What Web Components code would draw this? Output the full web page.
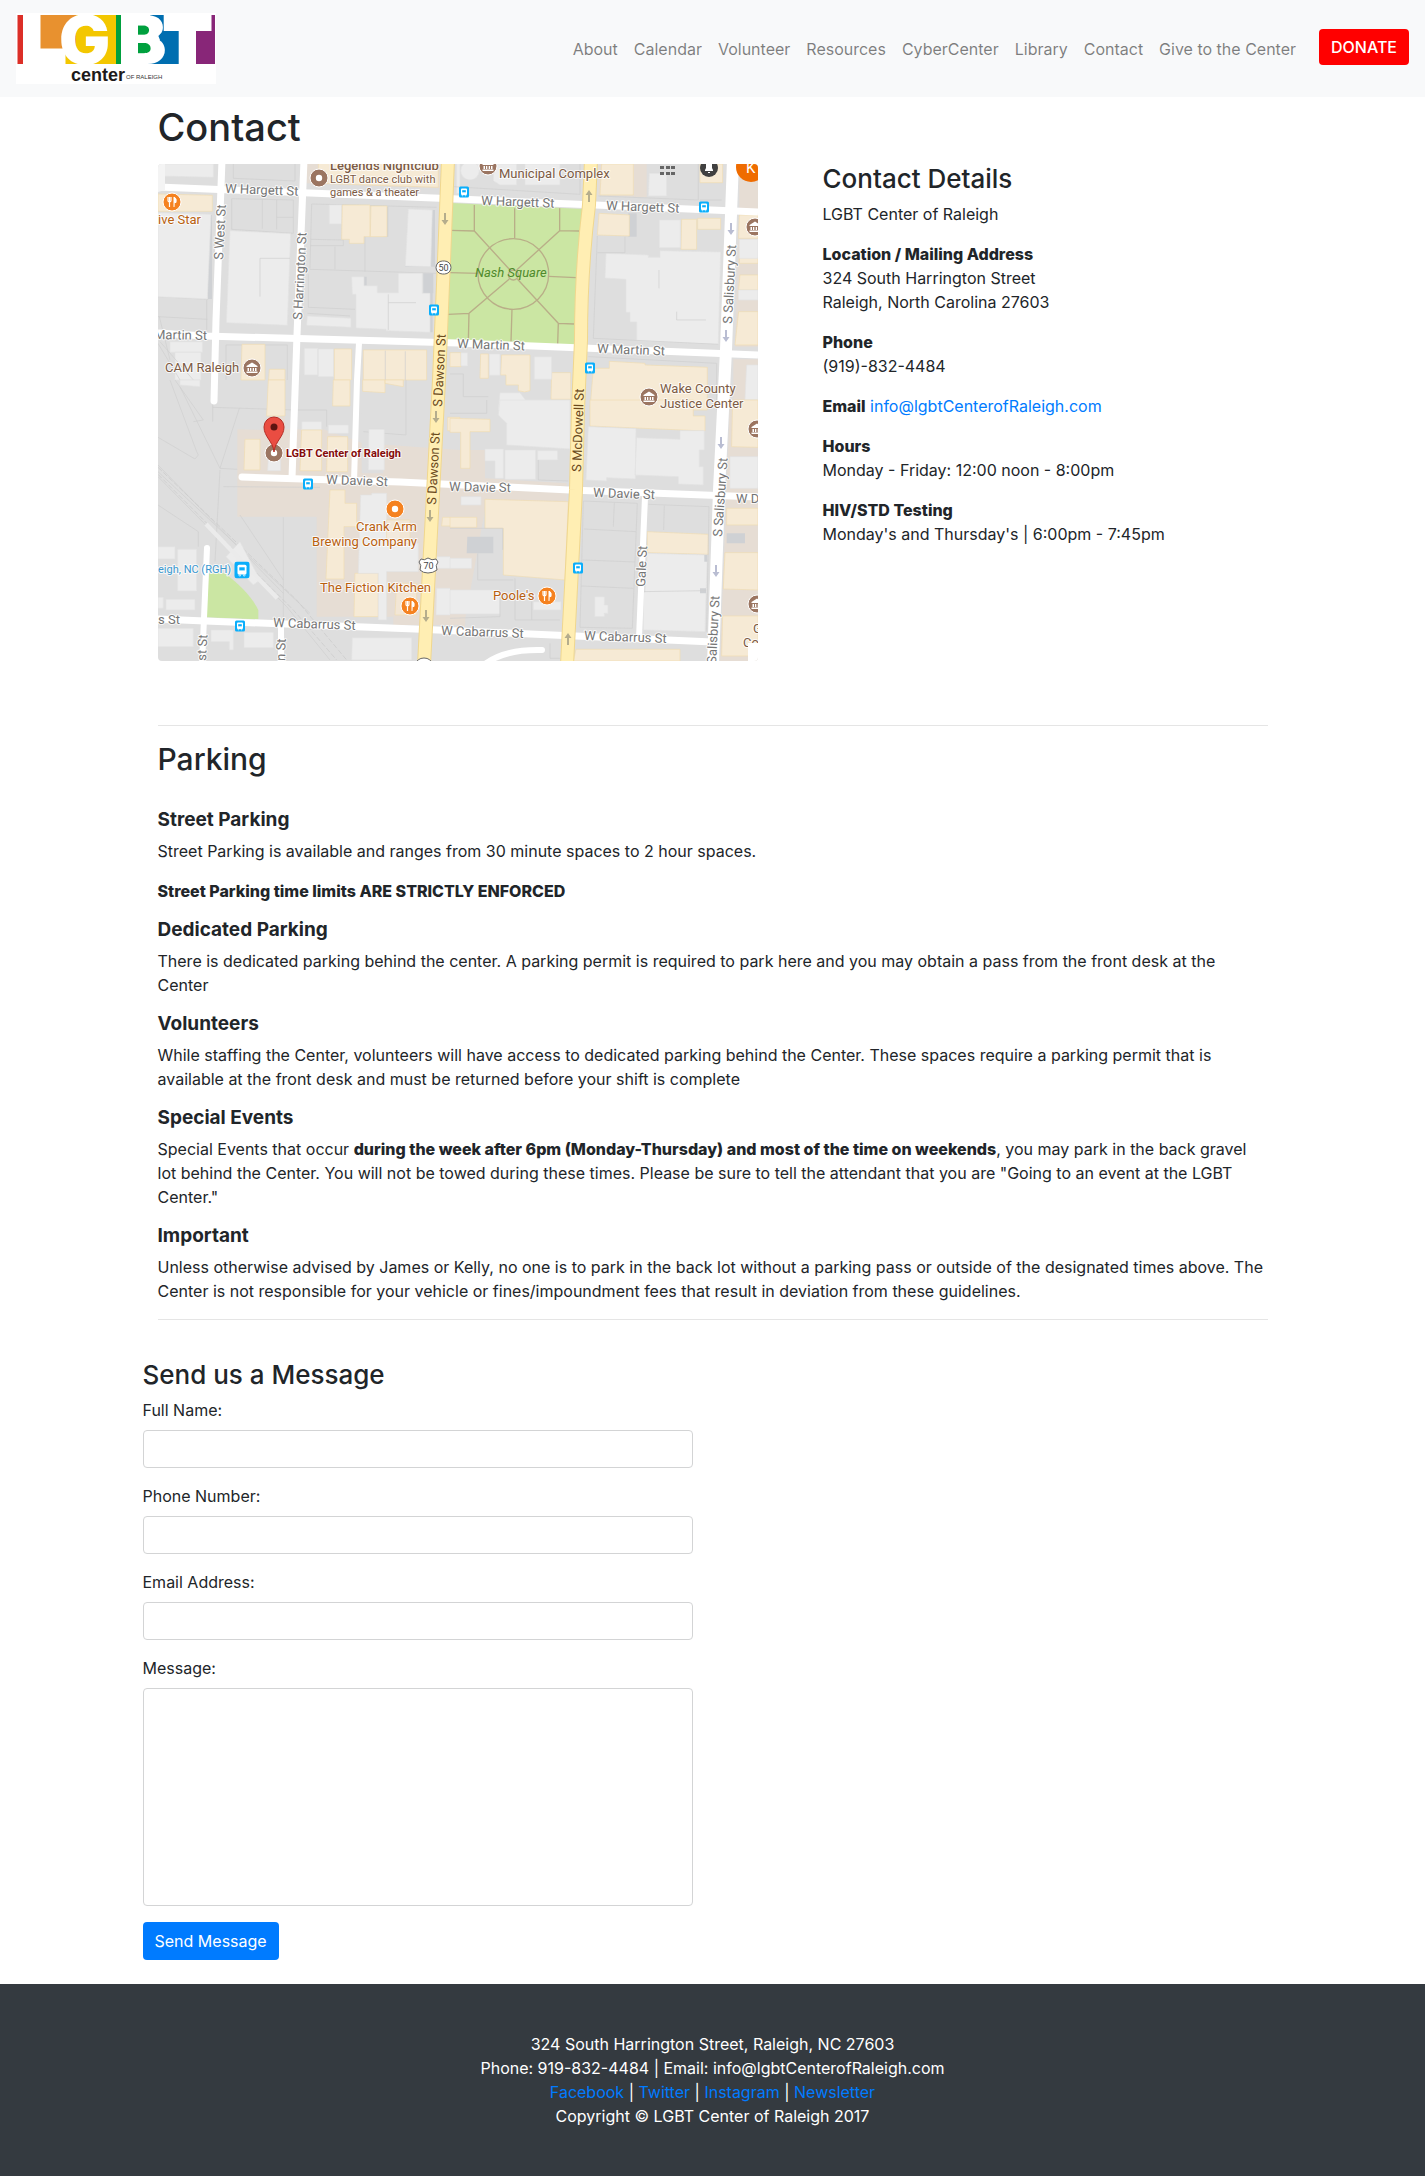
<!DOCTYPE html>
<html lang="en">
<head>
<meta charset="utf-8">
<meta name="viewport" content="width=device-width, initial-scale=1">
<title>Contact</title>
<style>
  body {
    margin: 0;
    background: #fff;
    color: #212529;
    font: 400 16px/24px Inter, "Liberation Sans", sans-serif;
  }
</style>
</head>
<body>
<contact-page></contact-page>

<template id="t-page">
  <style>
    :host { display: block; }
    main { box-sizing: border-box; max-width: 1140px; margin: 0 auto; padding: 8px 0 24px; }
    section { padding: 0 15px; }
    h1 { margin: 0 0 15px; font-size: 38px; line-height: 44px; font-weight: 500; }
    .cols { display: grid; grid-template-columns: 7fr 5fr; margin: 0 -15px; }
    .cols > * { padding: 0 15px; }
    hr { height: 1px; border: 0; margin: 64px 0 16px; background: #e5e5e5; }
    hr.end { margin: 16px 0 40px; }
  </style>
  <site-header></site-header>
  <main>
    <section>
      <h1>Contact</h1>
      <div class="cols">
        <site-map></site-map>
        <contact-details></contact-details>
      </div>
      <hr>
      <parking-info></parking-info>
      <hr class="end">
    </section>
    <message-form></message-form>
  </main>
  <site-footer></site-footer>
</template>

<template id="t-header">
  <style>
    :host { display: block; background: #f8f9fa; }
    header { display: flex; align-items: center; justify-content: space-between; padding: 13px 16px; }
    site-logo { flex: none; }
    ul { display: flex; align-items: flex-start; margin: 0; padding: 0; list-style: none; }
    .donate { margin-left: 15px; padding: 6px 12px; border: 0; border-radius: 4px; background: #f00; color: #fff; font: inherit; font-weight: 500; }
  </style>
  <header>
    <site-logo></site-logo>
    <nav>
      <ul>
        <li><nav-item>About</nav-item></li>
        <li><nav-item>Calendar</nav-item></li>
        <li><nav-item>Volunteer</nav-item></li>
        <li><nav-item>Resources</nav-item></li>
        <li><nav-item>CyberCenter</nav-item></li>
        <li><nav-item>Library</nav-item></li>
        <li><nav-item>Contact</nav-item></li>
        <li><nav-item>Give to the Center</nav-item></li>
        <li><button class="donate" type="button">DONATE</button></li>
      </ul>
    </nav>
  </header>
</template>

<template id="t-nav-item">
  <style>
    :host { display: block; }
    a { display: block; padding: 8px; color: rgba(0,0,0,.5); text-decoration: none; white-space: nowrap; }
  </style>
  <a href="#"><slot></slot></a>
</template>

<template id="t-logo">
  <style>
    :host { display: block; }
    svg { display: block; }
    .big { font: 900 68px Inter, sans-serif; fill: #fff; }
  </style>
  <svg width="200" height="71" viewBox="16 13 200 71" role="img" aria-label="LGBT Center of Raleigh">
    <rect x="16" y="13" width="200" height="71" fill="#fff"/>
    <rect x="17.500" y="15" width="5.500" height="49" fill="#dc2f27"/>
    <rect x="40.500" y="15" width="36" height="33.500" fill="#e8912f"/>
    <path d="M76 15H116V64H65.500V48.500H76Z" fill="#f3c700"/>
    <rect x="138" y="24" width="13" height="32" fill="#00a03e"/>
    <path d="M150 15H163.700V31H178.700V64H147L160 40Z" fill="#006eb0"/>
    <path d="M211.500 15H215V64H196V31H211.500Z" fill="#882678"/>
    <text class="big" x="59" y="64">G</text>
    <text class="big" x="121" y="64">B</text>
    <rect x="116" y="15" width="5" height="49" fill="#00a03e"/>
    <text x="71" y="81" font-family="Liberation Sans, sans-serif" font-weight="700" font-size="18" fill="#1d1a1a">center</text>
    <text x="126" y="79" font-family="Liberation Sans, sans-serif" font-size="6" fill="#333">OF RALEIGH</text>
  </svg>
</template>

<template id="t-details">
  <style>
    :host { display: block; }
    h3 { margin: 0 0 8px; font-size: 26px; line-height: 30px; font-weight: 500; }
    p { margin: 0 0 16px; }
    strong { font-weight: 800; }
    a { color: #007bff; text-decoration: none; }
  </style>
  <h3>Contact Details</h3>
  <p>LGBT Center of Raleigh</p>
  <p><strong>Location / Mailing Address</strong><br>324 South Harrington Street<br>Raleigh, North Carolina 27603</p>
  <p><strong>Phone</strong><br>(919)-832-4484</p>
  <p><strong>Email</strong> <a href="mailto:info@lgbtCenterofRaleigh.com">info@lgbtCenterofRaleigh.com</a></p>
  <p><strong>Hours</strong><br>Monday - Friday: 12:00 noon - 8:00pm</p>
  <p><strong>HIV/STD Testing</strong><br>Monday's and Thursday's | 6:00pm - 7:45pm</p>
</template>

<template id="t-parking">
  <style>
    :host { display: block; }
    h2 { margin: 0 0 32px; font-size: 30px; line-height: 35px; font-weight: 500; }
    strong { font-weight: 800; }
  </style>
  <h2>Parking</h2>
  <info-block heading="Street Parking">
    <p>Street Parking is available and ranges from 30 minute spaces to 2 hour spaces.</p>
    <p><strong>Street Parking time limits ARE STRICTLY ENFORCED</strong></p>
  </info-block>
  <info-block heading="Dedicated Parking">
    <p>There is dedicated parking behind the center. A parking permit is required to park here and you may obtain a pass from the front desk at the Center</p>
  </info-block>
  <info-block heading="Volunteers">
    <p>While staffing the Center, volunteers will have access to dedicated parking behind the Center. These spaces require a parking permit that is available at the front desk and must be returned before your shift is complete</p>
  </info-block>
  <info-block heading="Special Events">
    <p>Special Events that occur <strong>during the week after 6pm (Monday-Thursday) and most of the time on weekends</strong>, you may park in the back gravel lot behind the Center. You will not be towed during these times. Please be sure to tell the attendant that you are "Going to an event at the LGBT Center."</p>
  </info-block>
  <info-block heading="Important">
    <p>Unless otherwise advised by James or Kelly, no one is to park in the back lot without a parking pass or outside of the designated times above. The Center is not responsible for your vehicle or fines/impoundment fees that result in deviation from these guidelines.</p>
  </info-block>
</template>

<template id="t-info-block">
  <style>
    :host { display: block; }
    h5 { margin: 0 0 8px; font-size: 19px; line-height: 22px; font-weight: 700; }
    ::slotted(p) { margin: 0 0 16px; }
  </style>
  <h5></h5>
  <slot></slot>
</template>

<template id="t-form">
  <style>
    :host { display: block; }
    h3 { margin: 0 0 8px; font-size: 26px; line-height: 30px; font-weight: 500; }
    form { max-width: 550px; }
    button { padding: 7px 12px; border: 0; border-radius: 4px; background: #007bff; color: #fff; font: inherit; display: block; }
  </style>
  <h3>Send us a Message</h3>
  <form>
    <form-field label="Full Name:" type="text"></form-field>
    <form-field label="Phone Number:" type="tel"></form-field>
    <form-field label="Email Address:" type="email"></form-field>
    <form-field label="Message:" type="multiline"></form-field>
    <button type="button">Send Message</button>
  </form>
</template>

<template id="t-field">
  <style>
    :host { display: block; margin-bottom: 16px; }
    label { display: block; margin-bottom: 8px; }
    input, textarea {
      display: block; box-sizing: border-box; width: 100%; height: 38px; margin: 0;
      padding: 6px 12px; border: 1px solid #d3d4d5; border-radius: 4px;
      background: #fff; color: #495057; font: inherit;
    }
    textarea { height: 218px; resize: none; }
  </style>
  <label for="control"></label>
</template>

<template id="t-footer">
  <style>
    :host { display: block; background: #343a40; color: #fff; }
    footer { padding: 48px 16px; text-align: center; }
    a { color: #007bff; text-decoration: none; }
  </style>
  <footer>
    <div>324 South Harrington Street, Raleigh, NC 27603</div>
    <div>Phone: 919-832-4484 | Email: info@lgbtCenterofRaleigh.com</div>
    <div><a href="#">Facebook</a> | <a href="#">Twitter</a> | <a href="#">Instagram</a> | <a href="#">Newsletter</a></div>
    <div>Copyright © LGBT Center of Raleigh 2017</div>
  </footer>
</template>

<template id="t-map">
  <style>
    :host { display: block; }
    svg { display: block; width: 100%; max-width: 600px; height: auto; border-radius: 4px; }
    text { font-family: Roboto, sans-serif; font-size: 13px; paint-order: stroke; stroke: #fff; stroke-opacity: .8; stroke-width: 2px; stroke-linejoin: round; }
    .st { fill: #757575; }
    .hw { fill: #6b4a1c; stroke: #fff0b8; }
    .poi { fill: #7c5a44; }
    .food { fill: #b8600f; }
    .small { font-size: 11px; }
    .plain { stroke: none; }
    .road { fill: none; stroke: #fff; stroke-width: 7; stroke-linejoin: round; }
    .lot { fill: none; stroke: #cfcfcf; stroke-width: 2; }
    .g { fill: #ececec; stroke: #e2e2e2; stroke-width: 2; }
    .t { fill: #f6ead5; stroke: #f0dcb2; stroke-width: 2; }
    .z { fill: #e6ddd4; }
    .sh { fill: #cfd1d4; }
  </style>
  <svg viewBox="158 164 600 497" role="img" aria-label="Map of the streets around the LGBT Center of Raleigh">
    <defs>
      <g id="bus"><rect x="-5" y="-5.500" width="10" height="11" rx="1.500" fill="#0aaefb"/><rect x="-3" y="-3.500" width="6" height="6.500" rx="1" fill="#fff"/><path d="M-2-2H2V.500H-2ZM-2 3H-1V4H-2ZM1 3H2V4H1Z" fill="#0aaefb" stroke="#fff" stroke-width=".4"/></g>
      <g id="food"><circle r="9" fill="#f58220" stroke="#fff"/><path d="M-4-5V-1.500Q-4 0-2.500 0V5M-2.500-5V0M-1-5V-1.500Q-1 0-2.500 0" fill="none" stroke="#fff" stroke-width="1.200"/><path d="M2 5V-5Q5-4 4 .500H2.500" fill="#fff" stroke="#fff"/></g>
      <g id="dot"><circle r="9" stroke="#fff"/><circle r="3.200" fill="#fff"/></g>
      <g id="hall"><circle r="9" fill="#9b7561" stroke="#fff"/><path d="M-5.500-2 0-5.500 5.500-2V-1H-5.500ZM-4.500 0H-3V3H-4.500ZM-2 0H-.700V3H-2ZM.700 0H2V3H.700ZM3 0H4.500V3H3ZM-5.500 3.500H5.500V5H-5.500Z" fill="#fff"/></g>
      <path id="down" d="M-1-6H1V1H3.500L0 6-3.500 1H-1Z"/>
    </defs>
    <rect x="158" y="164" width="600" height="497" fill="#dedede"/>

    <!-- north-west blocks -->
    <g transform="translate(150 100) scale(.3333)">
      <path class="z" d="M470 190H870V265L470 250Z"/>
      <path class="t" d="M505 190H865V262L505 250Z"/>
      <path class="g" d="M24 192H190V232L24 228Z"/>
      <path class="lot" d="M250 192V235L435 243V192M245 296V388L430 400V300ZM337 298V386M380 300V388M380 352H430M24 590 175 598M24 650 172 658M28 650 60 780M170 600V690"/>
      <path class="t" d="M24 282 187 286V334H24Z"/>
      <path class="sh" d="M174 345H186V597H174Z"/>
      <path class="g" d="M24 338 183 343 172 597 24 590ZM240 392 422 401 412 676 229 668Z"/>
      <path class="lot" d="M330 475H420M330 475V590M485 312 860 322M485 312 480 505M482 418 580 420V437H482M555 440V508M480 508 860 520M645 390V515M475 523V622L615 628M472 640 600 648"/>
      <path class="g" d="M538 315H575V372H538Z"/>
      <path class="sh" d="M700 320H715V410H700ZM765 500H855V330H845ZM820 520H850V580H820ZM838 580H848V697H838ZM640 530H650V560H640Z"/>
      <path class="t" d="M577 315H660V410H642V430H598V418H575ZM663 318H711V410H661Z"/>
      <path class="g" d="M775 327 847 330 842 500 766 498ZM605 530H642V557H682V578H745V520H817V580H840V697L708 692V688L618 684V583H607ZM472 648 603 655V682L470 676Z"/>
      <path class="lot" d="M715 583V690M715 608H798"/>
      <path class="g" d="M60 725H157V757H60ZM75 757H153V840H75ZM463 745H503V825H463ZM505 747H551V830H505Z"/>
      <path class="lot" d="M24 730 90 840M30 725 130 840M228 735H412V840M228 735V840"/>
      <path class="t" d="M276 733H345V840H273ZM358 808H405V840H356ZM553 747H605V840H553ZM640 750H830V840H640Z"/>
      <path class="lot" d="M706 752V840M766 754V840"/>
      <path class="g" d="M865 190H930V280H920V190Z"/>
    </g>

    <!-- north-east blocks -->
    <g transform="translate(450 150) scale(.3333)">
      <path class="z" d="M445 40H590V142L445 136ZM868 42H924V190H868ZM868 192H924V590H855Z"/>
      <path class="g" d="M60 42H200V105H150L130 92V60H60ZM225 42H330V105H225ZM598 70H650V138H595Z"/>
      <circle class="g" cx="60" cy="62" r="28"/>
      <path class="lot" d="M10 42V110L390 133V42M445 138 745 150M745 42V150M750 150H815"/>
      <path class="sh" d="M535 190H560V260H535Z"/>
      <path class="t" d="M455 42H550V135H450ZM750 42H818V98H750ZM447 190 538 195V258L442 255ZM695 208H740V298H693ZM743 205 812 205V238H743ZM868 195H924V265H866ZM870 375H924V420H866ZM866 485H924V585H855ZM870 300H924V340H868Z"/>
      <path class="g" d="M628 210H691V293H628ZM868 268H924V325H868ZM865 420H924V450H865ZM468 310 595 315V322H630V302L812 306 805 583 560 572V516H540V487H528V388L465 384Z"/>
      <path class="lot" d="M442 258 430 565 805 583M442 308H525V260M627 360V415M680 485V510H768"/>
      <path class="t" d="M0 608H33V650H0ZM92 612H115V685H90ZM155 615H240V722Q225 730 205 722V705H168V675H152ZM305 668H362V748H303ZM430 655H478V634L585 640V645L772 652V780H420Z"/>
      <path class="g" d="M33 608H53V648H33ZM118 612H150V676H118ZM253 620H305V688H253ZM150 728H210L245 775V780H145Z"/>
      <path class="lot" d="M0 672H40V740H115M415 620 800 640V780"/>
      <path class="z" d="M850 628H924V780H850Z"/>
      <path class="g" d="M890 645H924V750H885Z"/>
    </g>

    <!-- south-west blocks -->
    <g transform="translate(150 380) scale(.3333)">
      <path class="z" d="M262 148 350 150V110H405V148H520L640 190 930 210V735L730 735V710H500V410H262Z"/>
      <path fill="#dedede" d="M437 0H615V145H437ZM635 100H700V280H635Z"/>
      <path class="lot" d="M60 0 140 215 145 225 135 237 24 172M90 20 210 265M75 0 160 120 130 125M188 0V125M188 82 435 90M268 85 210 265 262 268M210 270 195 545M220 320 510 322M24 255 400 640M24 275 480 700M24 290 410 680 540 840M270 405 400 600M400 412V840M24 375 145 455V500M437 90H530V140M768 0V165L640 155"/>
      <path d="M24 262 440 660 590 840M24 283 430 690 560 840" fill="none" stroke="#c9c9c9" stroke-width="2" stroke-dasharray="16 6"/>
      <path class="g" d="M90 0H150V20L90 15ZM455 125H515V150H455ZM535 135H595V160H535ZM657 148H703V270H655ZM355 235H392V272H353ZM24 500H75V537H24ZM83 508H140V633H83ZM24 652H40V685H24ZM48 658H135V690H48ZM24 745H130V800H24ZM183 750H250V810H238V785H183ZM282 757H370V803H282ZM607 773H785V840H605ZM860 625H930V705H858Z"/>
      <path class="t" d="M355 0H405V108H350ZM638 0H705V38L638 34ZM550 0H600V78H548ZM285 178H330V270H282ZM455 150H515V272H450ZM533 170H593V275H530ZM540 330H585V370H620V440H582V597H528ZM893 112H930V152H893ZM878 412H930V438H875ZM705 0H760V20L705 10ZM615 580H685V710H612Z"/>
      <path class="g" d="M632 345H665V340H710V445H750V490H805V575H710V720H685V580H625ZM228 530 270 485 330 600 310 615ZM835 530H930V565H835Z"/>
      <path class="t" d="M740 610H800V705H735ZM710 420H780V490H710Z" fill-opacity=".7"/>
      <path d="M168 432 382 655" stroke="#ebebeb" stroke-width="13" fill="none"/>
      <path d="M176 580H225C270 615 305 650 325 690V718L169 712Z" fill="#cbe6a3"/>
    </g>

    <!-- south-east blocks -->
    <g transform="translate(450 400) scale(.3333)">
      <path class="z" d="M0 150H105V235L350 250V305H60L45 680 0 670ZM0 300H110L45 660 0 670ZM840 0H924V783H810Z"/>
      <path class="g" d="M150 0H360V147L170 135V70L145 45Z"/>
      <path class="t" d="M0 55 120 58V95H60V205H32V97H0ZM420 0H730V48H765V93L420 78ZM105 298 355 305 345 540 160 525V385H105ZM0 352H80V382H0ZM848 0H924V142L845 140ZM592 395 775 403V463L592 458ZM825 458H924V570L820 567ZM818 648H924V768H815ZM830 325H924V375H830ZM378 748H690V783H370Z"/>
      <path class="g" d="M415 80 558 86 556 237 470 233V243L408 240ZM560 113 690 118V92H763V150H748V200H760V255L685 252V230L555 225ZM105 147H160V235H135V183H105ZM165 150H257V238H165ZM263 152H323V180H263ZM33 290H93V315H33ZM0 475H65V505H0ZM0 570H150V642H0ZM250 605H333V630H250ZM434 590H463V615H474V640H463V650H434ZM592 460 772 465 765 695 580 690V578L585 575ZM840 170H924V265H840Z"/>
      <path class="sh" d="M750 565H768V580H750ZM763 465H772V485H763ZM52 410H130V460H50ZM830 400H885V430H830Z"/>
      <path class="lot" d="M400 303 562 310 547 685 390 682ZM402 387 558 395M398 480 555 486M393 558 550 565M493 308 490 380M595 313 777 320 770 695M643 317 641 390M0 385H158V450M83 460V540H190M150 570V650L0 655M195 535V660H330M245 605V660M265 180V240L355 243M300 730V775H330M580 575 768 572M0 40H110V0M115 255 355 260"/>
    </g>

    <!-- Nash Square -->
    <path d="M451 203 583 209 581 240 575 345 447 340Z" fill="#cbe6a3"/>
    <g transform="translate(450 150) scale(.3333)" fill="none" stroke="#b9ae88" stroke-width="4">
      <circle cx="190" cy="372" r="106"/><circle cx="190" cy="375" r="15"/>
      <path d="M73 165V243M0 241 73 243 180 360M194 175V265M329 175V242L388 243M329 242 200 360M0 368 85 370M296 379 378 383M-6 493 57 490 178 387M57 490 55 572M186 478 183 575M202 387 325 520 372 522M325 520 323 583"/>
    </g>

    <!-- streets -->
    <g class="road">
      <path d="M158 187 458 199 758 212M158 333 205 336 458 343 758 355M158 619 205 621 415 629 530 634 713 642"/>
      <path d="M242 477 400 482 570 490 758 497" stroke-linecap="round"/>
      <path d="M222 160 216 320 214 401" stroke-linecap="round"/>
      <path d="M304 160 297 335 292 478"/>
      <path d="M359 343 357 380 354 482M645 497 639 638M281 624V665" stroke-width="6"/>
      <path d="M207 548 202 665M485 664Q505 649 542 650" stroke-width="6" stroke-linecap="round"/>
      <path d="M733 160 726 350 719 490 713 665" stroke-width="12"/>
      <path d="M448 160 444 260 439 380 424 665M591 160 589 205Q581 270 581 340L578 410 576 490 567 665" stroke="#f0d78e" stroke-width="14"/>
      <path d="M448 160 444 260 439 380 424 665M591 160 589 205Q581 270 581 340L578 410 576 490 567 665" stroke="#ffeeb3" stroke-width="12"/>
    </g>
    <g fill="#b5ad8c">
      <use href="#down" x="445" y="219"/><use href="#down" x="436" y="417"/><use href="#down" x="430" y="516"/><use href="#down" x="426" y="616"/>
      <use href="#down" transform="translate(589 196) rotate(180)"/><use href="#down" transform="translate(568 639) rotate(180)"/>
    </g>
    <g fill="#b9bdd2">
      <use href="#down" x="731" y="229"/><use href="#down" x="726" y="336"/><use href="#down" x="721" y="443"/><use href="#down" x="716" y="571"/>
    </g>
    <path d="M158 164H165V190L158 192Z" fill="#f4f4f4"/>

    <!-- street names -->
    <g>
      <text class="st" transform="translate(225 193) rotate(2)">W Hargett St</text>
      <text class="st" transform="translate(481 205) rotate(2)">W Hargett St</text>
      <text class="st" transform="translate(606 210) rotate(2)">W Hargett St</text>
      <text class="st" transform="translate(154 339) rotate(1)">Martin St</text>
      <text class="st" transform="translate(457 348) rotate(2)">W Martin St</text>
      <text class="st" transform="translate(597 353) rotate(2)">W Martin St</text>
      <text class="st" transform="translate(326 484) rotate(2)">W Davie St</text>
      <text class="st" transform="translate(449 491) rotate(1)">W Davie St</text>
      <text class="st" transform="translate(593 497) rotate(2)">W Davie St</text>
      <text class="st" x="736" y="503">W D</text>
      <text class="st" x="158" y="624">s St</text>
      <text class="st" transform="translate(273 627) rotate(2)">W Cabarrus St</text>
      <text class="st" transform="translate(441 635) rotate(2)">W Cabarrus St</text>
      <text class="st" transform="translate(584 640) rotate(2)">W Cabarrus St</text>
      <text class="st" transform="translate(223 260) rotate(-87)">S West St</text>
      <text class="st" transform="translate(302 320) rotate(-87)">S Harrington St</text>
      <text class="st" transform="translate(732 324) rotate(-87)">S Salisbury St</text>
      <text class="st" transform="translate(722 537) rotate(-86)">S Salisbury St</text>
      <text class="st" transform="translate(716 664) rotate(-87)">Salisbury St</text>
      <text class="st" transform="translate(645 587) rotate(-87)">Gale St</text>
      <text class="st" transform="translate(206 661) rotate(-87)">st St</text>
      <text class="st" transform="translate(285 661) rotate(-88)">n St</text>
    </g>
    <text class="hw" transform="translate(442 407) rotate(-87)">S Dawson St</text>
    <text class="hw" transform="translate(436 505) rotate(-87)">S Dawson St</text>
    <text class="hw" transform="translate(581 472) rotate(-88)">S McDowell St</text>

    <!-- places -->
    <g fill="#9b7561"><use href="#dot" x="319" y="178"/><use href="#dot" x="274" y="453"/></g>
    <use href="#dot" x="395" y="509" fill="#f58220"/>
    <use href="#food" x="172" y="202"/><use href="#food" x="410" y="606"/><use href="#food" x="547" y="596"/>
    <use href="#hall" x="252" y="368"/><use href="#hall" x="488" y="166"/><use href="#hall" x="649" y="397"/>
    <use href="#hall" x="755" y="227"/><use href="#hall" x="757" y="429"/><use href="#hall" x="757" y="604"/>
    <use href="#bus" x="464" y="192"/><use href="#bus" x="704" y="207"/><use href="#bus" x="434" y="310"/><use href="#bus" x="590" y="368"/>
    <use href="#bus" x="308" y="484"/><use href="#bus" x="578" y="568"/><use href="#bus" x="240" y="626"/>
    <use href="#bus" transform="translate(242 570) scale(1.500)"/>
    <text class="poi" x="330" y="170" font-weight="500">Legends Nightclub</text>
    <text class="poi small" x="330" y="183">LGBT dance club with</text>
    <text class="poi small" x="330" y="196">games &amp; a theater</text>
    <text class="poi" x="499" y="178">Municipal Complex</text>
    <text class="food" x="158" y="224">ive Star</text>
    <text class="poi" x="165" y="372">CAM Raleigh</text>
    <text class="poi" x="660" y="393">Wake County</text>
    <text class="poi" x="660" y="408">Justice Center</text>
    <text class="food" x="417" y="531" text-anchor="end">Crank Arm</text>
    <text class="food" x="417" y="546" text-anchor="end">Brewing Company</text>
    <text class="food" x="320" y="592">The Fiction Kitchen</text>
    <text class="food" x="493" y="600">Poole's</text>
    <text class="small" x="158" y="573" fill="#3b97cf">eigh, NC (RGH)</text>
    <text class="plain" x="475" y="277" fill="#4f8a2b" font-style="italic">Nash Square</text>
    <text class="small" x="286" y="457" fill="#840b0b" font-weight="700">LGBT Center of Raleigh</text>
    <text class="poi" x="753" y="633">G</text>
    <text class="poi" x="743" y="647">Co</text>

    <!-- route shields -->
    <rect x="436" y="261" width="15" height="13" rx="6.500" fill="#fff" stroke="#666"/>
    <text class="plain" x="443.500" y="271" text-anchor="middle" fill="#444" style="font-size:9px">50</text>
    <path d="M421 559Q424 561 428 558 432 561 436 559L438 562Q435 565 437 570 433 573 428 573 423 573 420 570 422 565 419 562Z" fill="#fff" stroke="#666"/>
    <text class="plain" x="428.500" y="569" text-anchor="middle" fill="#444" style="font-size:9px">70</text>
    <ellipse cx="424" cy="664" rx="8" ry="6" fill="#fff" stroke="#666"/>

    <!-- marker -->
    <path d="M274 452C273 441 264 437 264 427A10 10 0 0 1 284 427C284 437 275 441 274 452Z" fill="#ea4d42" stroke="#b52d25"/>
    <circle cx="274" cy="427" r="3.500" fill="#5d1411"/>

    <!-- account controls -->
    <path d="M660 166H664V169H660ZM666 166H670V169H666ZM671 166H675V169H671ZM660 172H664V175H660ZM666 172H670V175H666ZM671 172H675V175H671Z" fill="#666"/>
    <circle cx="709" cy="168" r="9" fill="#404040"/>
    <path d="M705 170 706 168V164H712V168L713 170V171H705ZM708 172H710V173H708Z" fill="#fff"/>
    <circle cx="751" cy="167" r="15" fill="#ef6c00"/><text class="plain" x="746" y="173" fill="#fff" style="font-size:15px">K</text>
    <rect x="748" y="643" width="14" height="22" fill="#fff"/>
  </svg>
</template>

<script>
  class TemplateElement extends HTMLElement {
    constructor() {
      super();
      const source = document.getElementById(this.constructor.template);
      this.attachShadow({ mode: "open" }).append(source.content.cloneNode(true));
    }
  }

  const simple = {
    "site-header": "t-header",
    "site-logo": "t-logo",
    "nav-item": "t-nav-item",
    "site-map": "t-map",
    "contact-details": "t-details",
    "parking-info": "t-parking",
    "message-form": "t-form",
    "site-footer": "t-footer",
    "contact-page": "t-page"
  };

  customElements.define("info-block", class extends TemplateElement {
    static template = "t-info-block";
    connectedCallback() {
      this.shadowRoot.querySelector("h5").textContent = this.getAttribute("heading");
    }
  });

  customElements.define("form-field", class extends TemplateElement {
    static template = "t-field";
    connectedCallback() {
      if (this.shadowRoot.getElementById("control")) return;
      const type = this.getAttribute("type");
      const control = document.createElement(type === "multiline" ? "textarea" : "input");
      if (type !== "multiline") control.type = type;
      control.id = "control";
      this.shadowRoot.querySelector("label").textContent = this.getAttribute("label");
      this.shadowRoot.append(control);
    }
  });

  for (const [name, template] of Object.entries(simple)) {
    customElements.define(name, class extends TemplateElement {
      static template = template;
    });
  }
</script>
</body>
</html>
